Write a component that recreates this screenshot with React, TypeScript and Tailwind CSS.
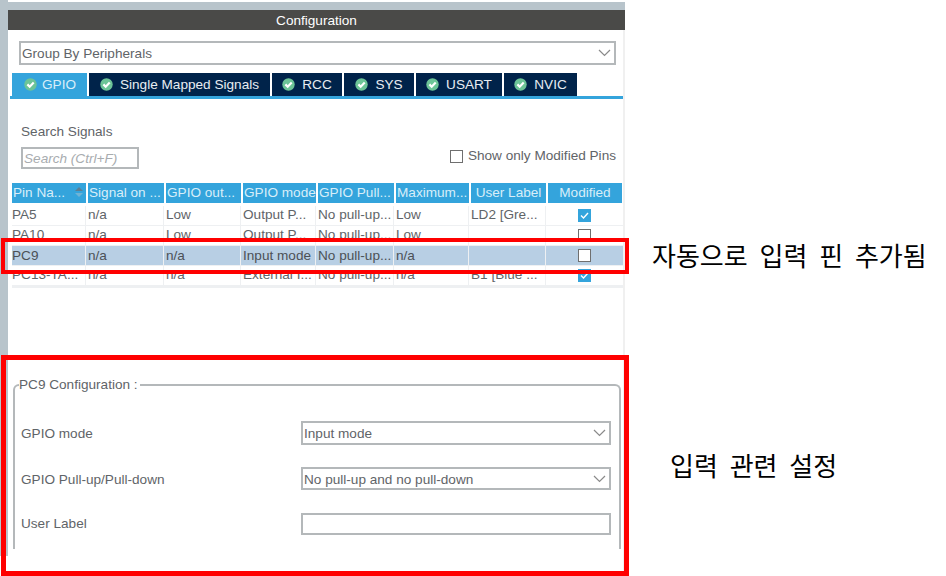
const columns = [
  'w-[74px]', 'w-[76px]', 'w-[75px]', 'w-[73px]', 'w-[76px]', 'w-[73px]', 'w-[75px]', 'w-[74px]',
];

const headers = ['Pin Na...', 'Signal on ...', 'GPIO out...', 'GPIO mode', 'GPIO Pull...', 'Maximum...', 'User Label', 'Modified'];

const rows = [
  { cells: ['PA5', 'n/a', 'Low', 'Output P...', 'No pull-up...', 'Low', 'LD2 [Gre...'], checked: true },
  { cells: ['PA10', 'n/a', 'Low', 'Output P...', 'No pull-up...', 'Low', ''], checked: false },
  { cells: ['PC9', 'n/a', 'n/a', 'Input mode', 'No pull-up...', 'n/a', ''], checked: false, selected: true },
  { cells: ['PC13-TA...', 'n/a', 'n/a', 'External I...', 'No pull-up...', 'n/a', 'B1 [Blue ...'], checked: true },
];

const tabs = [
  { label: 'Single Mapped Signals', width: 'w-[181px]' },
  { label: 'RCC', width: 'w-[70px]' },
  { label: 'SYS', width: 'w-[70px]' },
  { label: 'USART', width: 'w-[86px]' },
  { label: 'NVIC', width: 'w-[73px]' },
];

const TabCheck = () => (
  <svg width="13" height="13" viewBox="0 0 13 13" className="mb-[2px] shrink-0">
    <circle cx="6.5" cy="6.5" r="6.2" fill="#6cc497" />
    <path d="M3.4 6.4 L5.7 8.7 L9.7 4.5" fill="none" stroke="#ffffff" strokeWidth="2.2" />
  </svg>
);

const Chevron = () => (
  <svg width="13" height="8" viewBox="0 0 13 8" className="shrink-0">
    <path d="M1 1 L6.5 6.5 L12 1" fill="none" stroke="#8a8a8a" strokeWidth="1.2" />
  </svg>
);

const ModifiedBox = ({ checked }: { checked: boolean }) =>
  checked ? (
    <span className="flex h-[13px] w-[13px] items-center justify-center bg-[#34a4dc]">
      <svg width="11" height="11" viewBox="0 0 11 11">
        <path d="M2 5.5 L4.5 8 L9 3" fill="none" stroke="#ffffff" strokeWidth="1.4" />
      </svg>
    </span>
  ) : (
    <span className="h-[13px] w-[13px] border border-[#6f6f6f] bg-white" />
  );

const SelectBox = ({ value, className }: { value: string; className: string }) => (
  <div className={`flex items-center justify-between border-2 border-[#b4b8ba] bg-white pl-[1px] pr-[3px] ${className}`}>
    <span className="pt-[2px] text-[#5f6468]">{value}</span>
    <Chevron />
  </div>
);

export default function App() {
  return (
    <div className="relative flex h-[576px] w-[946px] overflow-hidden bg-white font-['Liberation_Sans',Arial,sans-serif] text-[13.6px] text-[#5f6468]">
      <div className="h-[556px] w-2 shrink-0 bg-[#b8c4cb]" />

      <div className="flex w-[617px] shrink-0 flex-col">
        <div className="mt-0.5 h-2 bg-[#b8c4cb]" />
        <div className="flex h-5 items-center justify-center bg-[#4a4a48] pt-[2px] text-white">Configuration</div>

        <div className="flex flex-1 flex-col border-r-2 border-[#f0f0f0]">
          <SelectBox value="Group By Peripherals" className="ml-[11px] mt-[11px] h-6 w-[597px]" />

          <div className="mt-2 flex h-[23px] gap-[2px] pl-1">
            <div className="flex w-[75px] items-center gap-[5px] bg-[#34a4dc] pl-3 pt-[2px] text-[#d8eef9]">
              <TabCheck />
              GPIO
            </div>
            {tabs.map((tab) => (
              <div key={tab.label} className={`flex items-center justify-center gap-[7px] bg-[#00234a] pt-[2px] text-[#e8edf2] ${tab.width}`}>
                <TabCheck />
                {tab.label}
              </div>
            ))}
          </div>
          <div className="ml-0.5 h-[3px] bg-[#34a4dc]" />

          <div className="ml-[13px] mt-[25px] leading-4">Search Signals</div>

          <div className="mr-[7px] mt-[7px] flex h-[22px] items-center justify-between pl-[13px]">
            <div className="flex h-[22px] w-[118px] items-center border-2 border-[#b4b8ba] pl-[1px] pt-[2px] italic text-[#a8acaf]">Search (Ctrl+F)</div>
            <label className="mb-[4px] flex items-center gap-[5px]">
              <span className="h-[13px] w-[13px] border border-[#6f6f6f] bg-white" />
              Show only Modified Pins
            </label>
          </div>

          <div className="ml-1 mt-[14px] w-[611px]">
            <div className="flex h-[20px] gap-[2px]">
              {headers.map((header, i) => (
                <div key={header} className={`relative flex items-center overflow-hidden whitespace-nowrap bg-[#34a4dc] pt-[1px] text-[#d8eef9] ${columns[i]} ${i >= 6 ? 'justify-center' : 'pl-[1px]'}`}>
                  {header}
                  {i === 0 && (
                    <svg width="8" height="12" viewBox="0 0 8 12" className="absolute right-[3px] top-[3px]">
                      <path d="M4 1 L8 5 H0 Z" fill="#5b7f95" />
                      <path d="M4 11 L8 7 H0 Z" fill="#6fb3d6" />
                    </svg>
                  )}
                </div>
              ))}
            </div>
            <div className="mt-[3px] border-b-2 border-[#eef0f2]">
              {rows.map((row) => (
                <div key={row.cells[0]} className={`flex h-[20px] gap-[2px] border-b border-[#eef0f2] ${row.selected ? 'bg-[#b8cfe4] text-[#4c5156]' : 'bg-white'}`}>
                  {row.cells.map((cell, i) => (
                    <div key={i} className={`flex shrink-0 items-center overflow-hidden whitespace-nowrap border-r border-[#eef0f2] ${columns[i]}`}>
                      <span className={row.selected ? 'pt-[1px]' : ''}>{cell}</span>
                    </div>
                  ))}
                  <div className={`flex shrink-0 items-center justify-center pr-[2px] ${columns[7]}`}>
                    <ModifiedBox checked={row.checked} />
                  </div>
                </div>
              ))}
            </div>
          </div>

          <fieldset className="ml-[5px] mt-[89px] h-[172px] w-[608px] rounded-t-md border-2 border-b-0 border-[#b4b8ba]">
            <legend className="ml-1 pr-[2px] leading-4">PC9 Configuration :</legend>
            <div className="mt-[28px] grid grid-cols-[280px_310px] items-center gap-y-[22px] pl-[6px]">
              <span className="pt-[3px]">GPIO mode</span>
              <SelectBox value="Input mode" className="h-6" />
              <span className="pt-[3px]">GPIO Pull-up/Pull-down</span>
              <SelectBox value="No pull-up and no pull-down" className="h-[23px]" />
              <span className="pt-[2px]">User Label</span>
              <div className="h-[22px] border-2 border-[#b4b8ba] bg-white" />
            </div>
          </fieldset>
        </div>
      </div>

      {/* annotation layer drawn over the screenshot */}
      <div className="absolute left-[1px] top-[238px] h-[36px] w-[628px] border-[4px] border-[#ff0000]" />
      <div className="absolute left-[1px] top-[355px] h-[221px] w-[628px] border-[5px] border-[#ff0000]" />
      <div className="absolute left-[652px] top-[237px] whitespace-nowrap font-['Noto_Sans_CJK_KR',sans-serif] text-[26px] leading-9 [word-spacing:6px] text-black">자동으로 입력 핀 추가됨</div>
      <div className="absolute left-[670px] top-[447px] whitespace-nowrap font-['Noto_Sans_CJK_KR',sans-serif] text-[26px] leading-9 [word-spacing:6px] text-black">입력 관련 설정</div>
    </div>
  );
}
